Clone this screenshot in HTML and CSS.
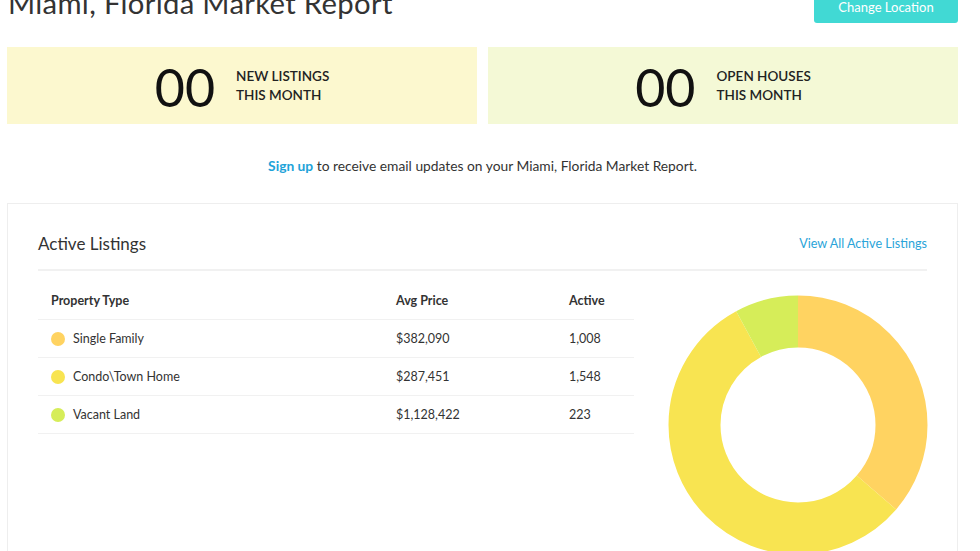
FILE: index.html
```html
<!DOCTYPE html>
<html>
<head>
<meta charset="utf-8">
<link rel="stylesheet" href="styles.css">
</head>
<body>
<div class="page">
  <header class="top">
    <h1 class="title">Miami, Florida Market Report</h1>
    <button class="btn">Change Location</button>
  </header>
  <section class="stats">
    <div class="stat stat-a">
      <span class="num">00</span>
      <span class="label">NEW LISTINGS<br>THIS MONTH</span>
    </div>
    <div class="stat stat-b">
      <span class="num">00</span>
      <span class="label">OPEN HOUSES<br>THIS MONTH</span>
    </div>
  </section>
  <p class="signup"><a class="link-strong">Sign up</a> to receive email updates on your Miami, Florida Market Report.</p>
  <section class="card">
    <div class="card-head">
      <h2 class="card-title">Active Listings</h2>
      <a class="link">View All Active Listings</a>
    </div>
    <div class="card-body">
      <div class="table">
        <div class="row head">
          <span class="c1">Property Type</span><span class="c2">Avg Price</span><span class="c3">Active</span>
        </div>
        <div class="row">
          <span class="c1"><i class="dot d1"></i>Single Family</span><span class="c2">$382,090</span><span class="c3">1,008</span>
        </div>
        <div class="row">
          <span class="c1"><i class="dot d2"></i>Condo\Town Home</span><span class="c2">$287,451</span><span class="c3">1,548</span>
        </div>
        <div class="row">
          <span class="c1"><i class="dot d3"></i>Vacant Land</span><span class="c2">$1,128,422</span><span class="c3">223</span>
        </div>
      </div>
      <div class="chart">
        <svg width="260" height="260" viewBox="0 0 260 260">
          <g transform="rotate(-90 130 130)">
            <circle cx="130" cy="130" r="103.5" fill="none" stroke="#ffd361" stroke-width="52" stroke-dasharray="235.9 650.3" stroke-dashoffset="0"/>
            <circle cx="130" cy="130" r="103.5" fill="none" stroke="#f8e451" stroke-width="52" stroke-dasharray="362.3 650.3" stroke-dashoffset="-235.9"/>
            <circle cx="130" cy="130" r="103.5" fill="none" stroke="#d6ed59" stroke-width="52" stroke-dasharray="52.1 650.3" stroke-dashoffset="-598.2"/>
          </g>
        </svg>
      </div>
    </div>
  </section>
</div>
</body>
</html>
```

FILE: styles.css
```css
* { box-sizing: border-box; }
html, body { margin: 0; padding: 0; background: #fff; }
body {
  font-family: "Lato", "Noto Sans", sans-serif;
  color: #333;
  overflow: hidden;
}
.page { padding: 0 22px 0 7px; }
.top {
  display: flex;
  justify-content: space-between;
  align-items: flex-start;
  margin-top: -15px;
  height: 38px;
}
.title {
  margin: 0 0 0 1px;
  font-weight: 400;
  font-size: 29.3px;
  line-height: 36px;
  color: #333;
  letter-spacing: 0.3px;
}
.btn {
  width: 144px;
  height: 38px;
  border: none;
  border-radius: 3px;
  background: #41d9d4;
  color: #fff;
  font-family: "Lato", "Noto Sans", sans-serif;
  font-size: 13px;
  padding: 6px 0 0;
}
.stats {
  display: grid;
  grid-template-columns: 1fr 1fr;
  gap: 11px;
  margin-top: 24px;
}
.stat {
  height: 77px;
  display: flex;
  align-items: center;
  justify-content: center;
  gap: 21px;
}
.stat-a { background: #fcf8cf; }
.stat-b { background: #f4f9d6; }
.num {
  font-size: 52px;
  line-height: 1;
  color: #111;
  font-weight: 400;
  margin-top: 2px;
}
.label {
  font-size: 13.5px;
  line-height: 19px;
  color: #222;
  font-weight: 600;
}
.signup {
  text-align: center;
  font-size: 13.8px;
  margin: 32px 0 0;
  line-height: 20px;
  color: #333;
}
.link-strong { color: #1ea3d9; font-weight: 700; }
.card {
  margin-top: 27px;
  border: 1px solid #eee;
  border-bottom: none;
  padding: 0 30px;
  height: 400px;
}
.card-head {
  display: flex;
  justify-content: space-between;
  align-items: center;
  height: 67px;
  padding-top: 13px;
  border-bottom: 2px solid #f1f1f1;
}
.card-title {
  margin: 0;
  font-size: 17px;
  font-weight: 400;
  color: #333;
}
.link { color: #2aa4d9; font-size: 12.6px; }
.card-body {
  display: grid;
  grid-template-columns: 596px 1fr;
}
.table { padding-top: 11px; }
.row {
  display: grid;
  grid-template-columns: 358px 173px 1fr;
  height: 38px;
  align-items: center;
  border-bottom: 1px solid #f1f1f1;
  font-size: 12.5px;
  color: #333;
}
.row.head { font-weight: 700; height: 38px; }
.c1 { padding-left: 13px; display: flex; align-items: center; }
.dot {
  width: 14px; height: 14px; border-radius: 50%;
  display: inline-block; margin-right: 8px;
}
.d1 { background: #ffd361; }
.d2 { background: #f8e451; }
.d3 { background: #d6ed59; }
.chart {
  display: flex;
  justify-content: flex-end;
  padding-top: 24px;
  margin-right: -1px;
}
```
